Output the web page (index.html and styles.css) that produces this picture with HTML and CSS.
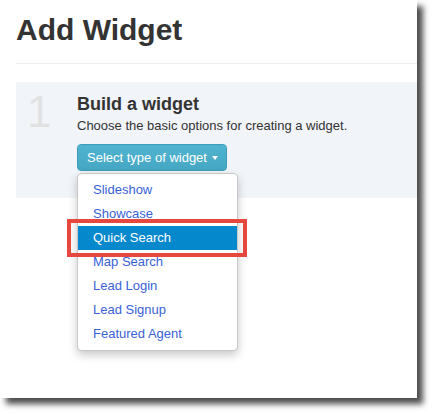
FILE: index.html
```html
<!DOCTYPE html>
<html lang="en">
<head>
<meta charset="utf-8">
<title>Add Widget</title>
<link rel="stylesheet" href="styles.css">
</head>
<body>
<div class="page">
  <div class="content">
    <h1 class="title">Add Widget</h1>
    <div class="divider"></div>
    <div class="step">
      <div class="step-num">1</div>
      <div class="step-body">
        <h2 class="step-title">Build a widget</h2>
        <p class="step-desc">Choose the basic options for creating a widget.</p>
        <div class="btn-group">
          <button class="btn-info" type="button">Select type of widget <span class="caret"></span></button>
          <ul class="menu">
            <li class="item">Slideshow</li>
            <li class="item">Showcase</li>
            <li class="item active">Quick Search</li>
            <li class="item">Map Search</li>
            <li class="item">Lead Login</li>
            <li class="item">Lead Signup</li>
            <li class="item">Featured Agent</li>
          </ul>
          <div class="callout"></div>
        </div>
      </div>
    </div>
  </div>
</div>
</body>
</html>
```

FILE: styles.css
```css
html, body {
  margin: 0;
  padding: 0;
  background: #ffffff;
}

body {
  height: 414px;
  overflow: hidden;
  font-family: "Liberation Sans", Arial, sans-serif;
  color: #333333;
}

.page {
  width: 417px;
  height: 398px;
  background: #ffffff;
  box-shadow: 6px 6px 6px rgba(0, 0, 0, 0.7);
  overflow: hidden;
}

.content {
  padding-left: 16px;
}

.title {
  margin: 12px 0 0;
  font-size: 30px;
  line-height: 36px;
  font-weight: bold;
  color: #333333;
}

.divider {
  margin-top: 15px;
  border-top: 1px solid #eeeeee;
}

.step {
  margin-top: 18px;
  background: #f1f4f9;
  display: flex;
  padding: 10px 0 27px;
}

.step-num {
  width: 50px;
  padding-left: 11px;
  font-size: 44px;
  line-height: 40px;
  color: #e2e2e2;
}

.step-body {
  flex: 1;
}

.step-title {
  margin: 0 0 1px;
  font-size: 18px;
  line-height: 24px;
  font-weight: bold;
  color: #333333;
}

.step-desc {
  margin: 0 0 9px;
  font-size: 13px;
  line-height: 18px;
  color: #333333;
}

.btn-group {
  position: relative;
  display: inline-block;
}

.btn-info {
  display: flex;
  align-items: center;
  gap: 5px;
  height: 27px;
  width: 150px;
  padding: 0 0 0 9px;
  margin: 0;
  border: 1px solid #3f9dba;
  border-radius: 4px;
  background: linear-gradient(#50b4d1, #45a7c4);
  color: #ffffff;
  font-family: "Liberation Sans", Arial, sans-serif;
  font-size: 13px;
  line-height: 18px;
}

.caret {
  display: inline-block;
  width: 0;
  height: 0;
  border-top: 4px solid #ffffff;
  border-left: 3px solid transparent;
  border-right: 3px solid transparent;
}

.menu {
  position: absolute;
  top: 29px;
  left: 0;
  width: 159px;
  margin: 0;
  padding: 4px 0;
  list-style: none;
  background: #ffffff;
  border: 1px solid rgba(0, 0, 0, 0.22);
  border-radius: 5px;
  box-shadow: 0 4px 10px rgba(0, 0, 0, 0.22);
  z-index: 2;
}

.item {
  padding-left: 15px;
  font-size: 13px;
  line-height: 24px;
  color: #3a62d6;
}

.item.active {
  background: #0588cc;
  color: #ffffff;
}

.callout {
  position: absolute;
  left: -10px;
  top: 75px;
  width: 172px;
  height: 30px;
  border: 4px solid #e5483f;
  z-index: 3;
}
```
